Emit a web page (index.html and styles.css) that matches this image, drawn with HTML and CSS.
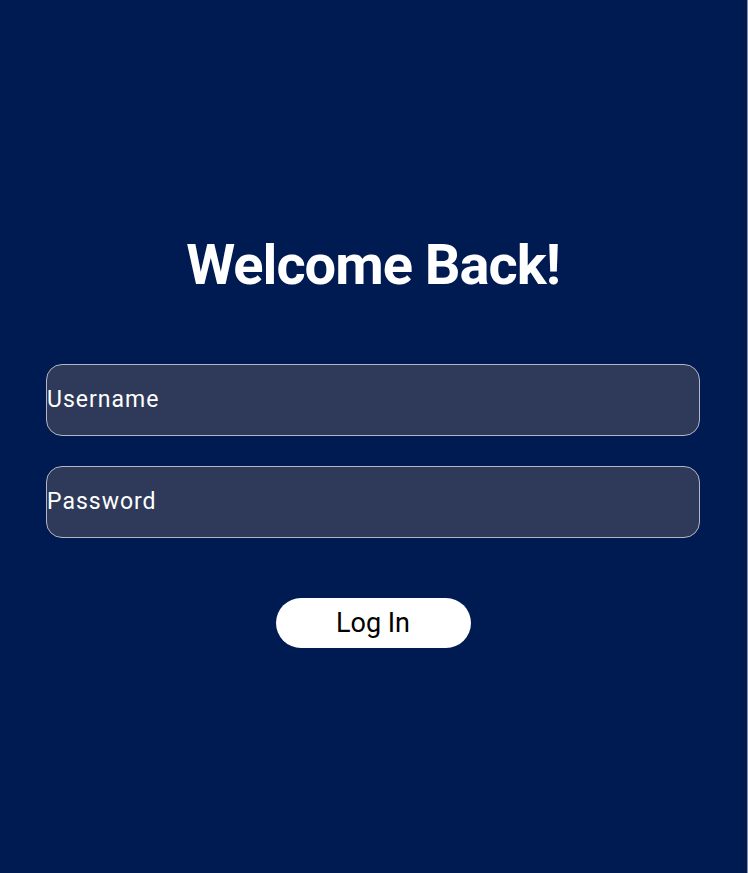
FILE: index.html
```html
<!DOCTYPE html>
<html lang="en">
<head>
<meta charset="utf-8">
<title>Welcome Back</title>
<link rel="stylesheet" href="styles.css">
</head>
<body>
<main class="page">
  <h1 class="title">Welcome Back!</h1>
  <form class="form">
    <div class="field">Username</div>
    <div class="field">Password</div>
    <button type="button" class="login">Log In</button>
  </form>
</main>
</body>
</html>
```
FILE: styles.css
```css
html, body {
  margin: 0;
  padding: 0;
  height: 100%;
}
body {
  background: #001a52;
  font-family: Roboto, "Liberation Sans", sans-serif;
  overflow: hidden;
}
.page {
  box-sizing: border-box;
  height: 873px;
  width: 748px;
  border-right: 1px solid #8c919c;
  padding: 232px 47px 0 46px;
  display: flex;
  flex-direction: column;
  align-items: stretch;
}
.title {
  margin: 0;
  font-size: 56px;
  line-height: 66px;
  font-weight: 700;
  color: #ffffff;
  text-align: center;
  letter-spacing: -1px;
}
.form {
  margin-top: 66px;
  display: flex;
  flex-direction: column;
  gap: 30px;
}
.field {
  box-sizing: border-box;
  height: 72px;
  background: #2f3a5a;
  border: 1px solid #b4b6c4;
  border-radius: 16px;
  color: #ffffff;
  font-size: 23px;
  font-weight: 400;
  letter-spacing: 1px;
  display: flex;
  align-items: center;
  padding: 0 0 1px 0;
}
.login {
  align-self: center;
  margin-top: 30px;
  width: 195px;
  height: 50px;
  border: none;
  border-radius: 25px;
  background: #ffffff;
  color: #000000;
  font-family: Roboto, "Liberation Sans", sans-serif;
  font-size: 27px;
  padding: 0;
}
```
